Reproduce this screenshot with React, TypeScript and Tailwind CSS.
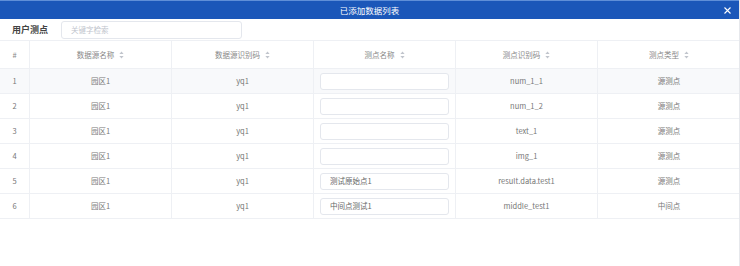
import React from "react";

const rows = [
  { n: 1, name: "园区1", code: "yq1", val: "", id: "num_1_1", type: "源测点" },
  { n: 2, name: "园区1", code: "yq1", val: "", id: "num_1_2", type: "源测点" },
  { n: 3, name: "园区1", code: "yq1", val: "", id: "text_1", type: "源测点" },
  { n: 4, name: "园区1", code: "yq1", val: "", id: "img_1", type: "源测点" },
  { n: 5, name: "园区1", code: "yq1", val: "测试原始点1", id: "result.data.test1", type: "源测点" },
  { n: 6, name: "园区1", code: "yq1", val: "中间点测试1", id: "middle_test1", type: "中间点" },
];

function Sort() {
  return (
    <svg width="5" height="8" viewBox="0 0 5 8" className="ml-[5px]">
      <path d="M2.5 0.5 L4.6 3 L0.4 3 Z" fill="#c0c4cc" />
      <path d="M2.5 7.5 L4.6 5 L0.4 5 Z" fill="#c0c4cc" />
    </svg>
  );
}

const font = { fontFamily: '"Noto Sans CJK SC", "Noto Sans", sans-serif' };

export default function App() {
  const cols = "grid grid-cols-[30px_142px_142px_142px_142px_142px]";
  return (
    <div className="w-[740px] h-[266px] bg-white overflow-hidden border-r border-[#e6e8ec] relative" style={font}>
      <div className="h-[19px] bg-[#1b57b9] border-t border-[#5f8fd8] flex items-center justify-center relative">
        <span className="text-white text-[8.5px] leading-none">已添加数据列表</span>
        <svg width="7" height="7" viewBox="0 0 7 7" className="absolute right-[8px] top-[6px]">
          <path d="M0.5 0.5 L6.5 6.5 M6.5 0.5 L0.5 6.5" stroke="#fff" strokeWidth="1.1" />
        </svg>
      </div>
      <div className="h-[21px] flex items-center">
        <span className="ml-[12px] text-[9px] font-bold text-[#444] w-[49px]">用户测点</span>
        <div className="w-[181px] h-[18px] border border-[#e4e7ed] rounded-[3px] flex items-center px-[9px]">
          <span className="text-[7.5px] text-[#c0c4cc]">关键字检索</span>
        </div>
      </div>
      <div className="border-t border-[#eef0f4]">
        <div className={`${cols} h-[28px] border-b border-[#eef0f4] text-[7.5px] text-[#888]`}>
          <div className="flex items-center justify-center border-r border-[#eef0f4]">#</div>
          {["数据源名称", "数据源识别码", "测点名称", "测点识别码", "测点类型"].map((h, i) => (
            <div key={h} className={`flex items-center justify-center ${i < 4 ? "border-r border-[#eef0f4]" : ""}`}>
              {h}
              <Sort />
            </div>
          ))}
        </div>
        {rows.map((r) => (
          <div
            key={r.n}
            className={`${cols} h-[25px] border-b border-[#eef0f4] text-[7.5px] text-[#777] ${r.n === 1 ? "bg-[#f8f9fb]" : "bg-white"}`}
          >
            <div className="flex items-center justify-center border-r border-[#eef0f4]">{r.n}</div>
            <div className="flex items-center justify-center border-r border-[#eef0f4]">{r.name}</div>
            <div className="flex items-center justify-center border-r border-[#eef0f4]">{r.code}</div>
            <div className="flex items-center justify-center border-r border-[#eef0f4]">
              <div className="w-[129px] h-[17px] bg-white border border-[#e4e7ed] rounded-[3px] flex items-center px-[9px] text-[7.5px] text-[#666]">
                {r.val}
              </div>
            </div>
            <div className="flex items-center justify-center border-r border-[#eef0f4]">{r.id}</div>
            <div className="flex items-center justify-center">{r.type}</div>
          </div>
        ))}
      </div>
    </div>
  );
}
